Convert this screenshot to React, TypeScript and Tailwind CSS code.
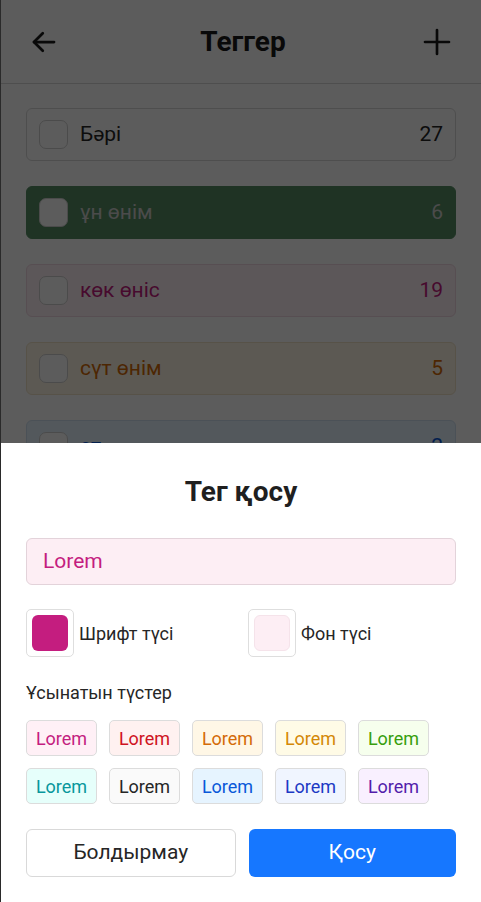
import React from "react";

const rows = [
  { name: "Бәрі", count: 27, bg: "bg-white", text: "text-[#262626]", border: "border-[#d9d9d9]" },
  { name: "ұн өнім", count: 6, bg: "bg-[#568e64]", text: "text-[#d0d0d0]", border: "border-[#568e64]" },
  { name: "көк өніс", count: 19, bg: "bg-[#fff0f6]", text: "text-[#c41d7f]", border: "border-[#f0d8e2]" },
  { name: "сүт өнім", count: 5, bg: "bg-[#fff7e6]", text: "text-[#d46b08]", border: "border-[#f0e2c8]" },
  { name: "ет", count: 2, bg: "bg-[#e6f4ff]", text: "text-[#0958d9]", border: "border-[#cfe0f0]" },
];

const chips = [
  { bg: "bg-[#fff0f6]", text: "text-[#c41d7f]" },
  { bg: "bg-[#fff1f0]", text: "text-[#cf1322]" },
  { bg: "bg-[#fff7e6]", text: "text-[#d46b08]" },
  { bg: "bg-[#fffbe6]", text: "text-[#d48806]" },
  { bg: "bg-[#f6ffed]", text: "text-[#389e0d]" },
  { bg: "bg-[#e6fffb]", text: "text-[#08979c]" },
  { bg: "bg-[#fafafa]", text: "text-[#262626]" },
  { bg: "bg-[#e6f4ff]", text: "text-[#0958d9]" },
  { bg: "bg-[#f0f5ff]", text: "text-[#1d39c4]" },
  { bg: "bg-[#f9f0ff]", text: "text-[#531dab]" },
];

export default function App() {
  return (
    <div
      className="relative w-[481px] h-[902px] overflow-hidden bg-white border-l border-[#2a2a2a]"
      style={{ fontFamily: "Roboto, 'Noto Sans', sans-serif" }}
    >
      {/* header */}
      <div className="h-[84px] flex items-center justify-between px-[28px] border-b border-[#d9d9d9]">
        <svg width="30" height="30" viewBox="0 0 24 24" fill="none" stroke="#1a1a1a" strokeWidth="2.2" strokeLinecap="round" strokeLinejoin="round">
          <path d="M20 12H4" />
          <path d="M11 5l-7 7 7 7" />
        </svg>
        <div className="text-[28px] font-bold text-[#1a1a1a] ml-[6px]">Теггер</div>
        <svg width="32" height="32" viewBox="0 0 24 24" fill="none" stroke="#1a1a1a" strokeWidth="2" strokeLinecap="round">
          <path d="M12 3v18" />
          <path d="M3 12h18" />
        </svg>
      </div>

      {/* list */}
      <div className="flex flex-col gap-[25px] px-[25px] pt-[24px]">
        {rows.map((r) => (
          <div
            key={r.name}
            className={`h-[53px] flex items-center px-[12px] rounded-[6px] border ${r.bg} ${r.border}`}
          >
            <div className="w-[29px] h-[29px] rounded-[7px] border border-[#d0d0d0] bg-white" />
            <div className={`ml-[12px] text-[21px] flex-1 ${r.text}`}>{r.name}</div>
            <div className={`text-[21px] ${r.text}`}>{r.count}</div>
          </div>
        ))}
      </div>

      {/* overlay */}
      <div className="absolute inset-0 bg-black/[0.64]" />

      {/* bottom sheet */}
      <div className="absolute left-0 right-0 bottom-0 h-[459px] bg-white px-[25px]">
        <div className="text-center text-[28px] font-bold text-[#1f1f1f] pt-[31px] leading-[36px]">Тег қосу</div>
        <div className="mt-[28px] h-[47px] rounded-[6px] border border-[#e3d3da] bg-[#fdeef4] flex items-center pl-[16px] text-[21px] text-[#c41d7f]">
          Lorem
        </div>
        <div className="mt-[24px] flex items-center">
          <div className="flex items-center w-[222px]">
            <div className="w-[48px] h-[48px] rounded-[5px] border border-[#dedede] flex items-center justify-center">
              <div className="w-[36px] h-[36px] rounded-[6px] bg-[#c41d7f]" />
            </div>
            <div className="ml-[5px] text-[18px] text-[#262626]">Шрифт түсі</div>
          </div>
          <div className="flex items-center">
            <div className="w-[48px] h-[48px] rounded-[5px] border border-[#dedede] flex items-center justify-center">
              <div className="w-[36px] h-[36px] rounded-[6px] bg-[#fdeef4] border border-[#f5e3ea]" />
            </div>
            <div className="ml-[5px] text-[18px] text-[#262626]">Фон түсі</div>
          </div>
        </div>
        <div className="mt-[24px] text-[18px] text-[#262626] leading-[24px]">Ұсынатын түстер</div>
        <div className="mt-[15px] grid grid-cols-[repeat(5,71px)] gap-x-[12px] gap-y-[12px]">
          {chips.map((c, i) => (
            <div
              key={i}
              className={`h-[36px] rounded-[5px] border border-[#dcdcdc] flex items-center justify-center text-[18px] ${c.bg} ${c.text}`}
            >
              Lorem
            </div>
          ))}
        </div>
        <div className="mt-[25px] flex gap-[13px]">
          <div className="flex-1 h-[48px] rounded-[6px] border border-[#d9d9d9] flex items-center justify-center text-[21px] text-[#262626]">
            Болдырмау
          </div>
          <div className="flex-1 h-[48px] rounded-[6px] bg-[#1677ff] flex items-center justify-center text-[21px] text-white">
            Қосу
          </div>
        </div>
      </div>
    </div>
  );
}
